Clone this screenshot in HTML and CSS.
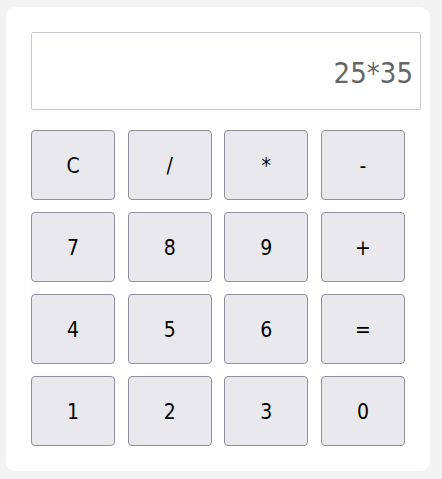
FILE: index.html
```html
<!DOCTYPE html>
<html lang="en">
<head>
    <meta charset="UTF-8">
    <meta name="viewport" content="width=device-width, initial-scale=1.0">
    <title>Calculator</title>
    <link rel="stylesheet" href="styles.css">
</head>
<body>
    <div class="calculator">
        <input type="text" class="display" id="display" value="25*35" readonly>
        <div class="keys">
            <button class="key" onclick="clearDisplay()">C</button>
            <button class="key" onclick="press('/')">/</button>
            <button class="key" onclick="press('*')">*</button>
            <button class="key" onclick="press('-')">-</button>
            <button class="key" onclick="press('7')">7</button>
            <button class="key" onclick="press('8')">8</button>
            <button class="key" onclick="press('9')">9</button>
            <button class="key" onclick="press('+')">+</button>
            <button class="key" onclick="press('4')">4</button>
            <button class="key" onclick="press('5')">5</button>
            <button class="key" onclick="press('6')">6</button>
            <button class="key" onclick="calculate()">=</button>
            <button class="key" onclick="press('1')">1</button>
            <button class="key" onclick="press('2')">2</button>
            <button class="key" onclick="press('3')">3</button>
            <button class="key" onclick="press('0')">0</button>
        </div>
    </div>

    <script>
        function press(value) {
            document.getElementById("display").value += value;
        }

        function clearDisplay() {
            document.getElementById("display").value = "";
        }

        function calculate() {
            var display = document.getElementById("display");
            try {
                display.value = eval(display.value);
            } catch (e) {
                display.value = "Error";
            }
        }
    </script>
</body>
</html>
```

FILE: styles.css
```css
body {
    font-family: "DejaVu Sans Condensed", "DejaVu Sans", sans-serif;
    margin: 0;
    padding: 7px 0 0 6px;
    background-color: #f3f3f3;
}

.calculator {
    width: 424px;
    box-sizing: border-box;
    background-color: #fff;
    border-radius: 10px;
    padding: 25px 9px 25px 25px;
}

.display {
    display: block;
    width: 390px;
    height: 78px;
    box-sizing: border-box;
    margin: 0 0 20px 0;
    padding: 4px 7px 0 7px;
    border: 1px solid #c8c8cf;
    border-radius: 2px;
    font-family: inherit;
    font-size: 29px;
    color: #666;
    text-align: right;
    outline: none;
}

.keys {
    display: grid;
    grid-template-columns: repeat(4, 84px);
    grid-auto-rows: 70px;
    column-gap: 12.67px;
    row-gap: 12px;
}

.key {
    background-color: #e9e9ed;
    color: #000;
    border: 1px solid #8f8f9d;
    border-radius: 4px;
    font-family: inherit;
    font-size: 21px;
    padding: 2px 0 0 0;
    cursor: pointer;
}

.key:hover {
    background-color: #d0d0d7;
}
```
